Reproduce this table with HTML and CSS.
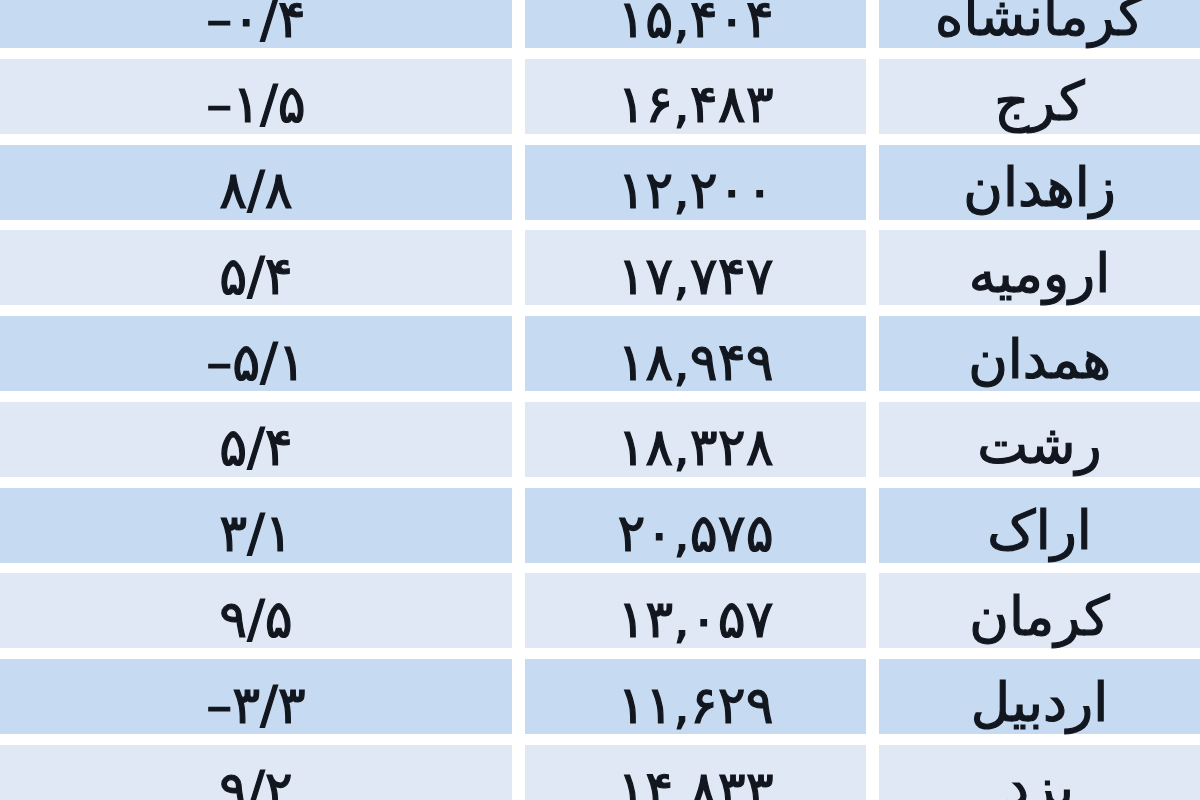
FILE: index.html
```html
<!DOCTYPE html>
<html lang="fa">
<head>
<meta charset="utf-8">
<title>جدول</title>
<link rel="stylesheet" href="styles.css">
</head>
<body>
<div class="table">
  <div class="row dark"><div class="cell num">–۰/۴</div><div class="cell num">۱۵,۴۰۴</div><div class="cell city">کرمانشاه</div></div>
  <div class="row light"><div class="cell num">–۱/۵</div><div class="cell num">۱۶,۴۸۳</div><div class="cell city">کرج</div></div>
  <div class="row dark"><div class="cell num">۸/۸</div><div class="cell num">۱۲,۲۰۰</div><div class="cell city">زاهدان</div></div>
  <div class="row light"><div class="cell num">۵/۴</div><div class="cell num">۱۷,۷۴۷</div><div class="cell city">ارومیه</div></div>
  <div class="row dark"><div class="cell num">–۵/۱</div><div class="cell num">۱۸,۹۴۹</div><div class="cell city">همدان</div></div>
  <div class="row light"><div class="cell num">۵/۴</div><div class="cell num">۱۸,۳۲۸</div><div class="cell city">رشت</div></div>
  <div class="row dark"><div class="cell num">۳/۱</div><div class="cell num">۲۰,۵۷۵</div><div class="cell city">اراک</div></div>
  <div class="row light"><div class="cell num">۹/۵</div><div class="cell num">۱۳,۰۵۷</div><div class="cell city">کرمان</div></div>
  <div class="row dark"><div class="cell num">–۳/۳</div><div class="cell num">۱۱,۶۲۹</div><div class="cell city">اردبیل</div></div>
  <div class="row light"><div class="cell num">۹/۲</div><div class="cell num">۱۴,۸۳۳</div><div class="cell city">یزد</div></div>
</div>
</body>
</html>
```
FILE: styles.css
```css
html, body {
  margin: 0;
  padding: 0;
  background: #ffffff;
  overflow: hidden;
}

body {
  width: 1200px;
  height: 800px;
  font-family: "DejaVu Sans", sans-serif;
  color: #12161e;
}

.table {
  display: flex;
  flex-direction: column;
  row-gap: 10.75px;
  margin-top: -27px;
}

.row {
  display: grid;
  grid-template-columns: 512px 341px 321px;
  column-gap: 13px;
  height: 75px;
}

.cell {
  display: flex;
  align-items: center;
  justify-content: center;
  line-height: 1;
  box-sizing: border-box;
  font-weight: normal;
  -webkit-text-stroke: 1.2px #12161e;
}

.num {
  direction: ltr;
  font-size: 52px;
  padding-top: 16px;
}

.city {
  direction: rtl;
  font-size: 54px;
  padding-top: 12px;
}

.dark .cell {
  background: #c6daf1;
}

.light .cell {
  background: #e1e8f5;
}
```
